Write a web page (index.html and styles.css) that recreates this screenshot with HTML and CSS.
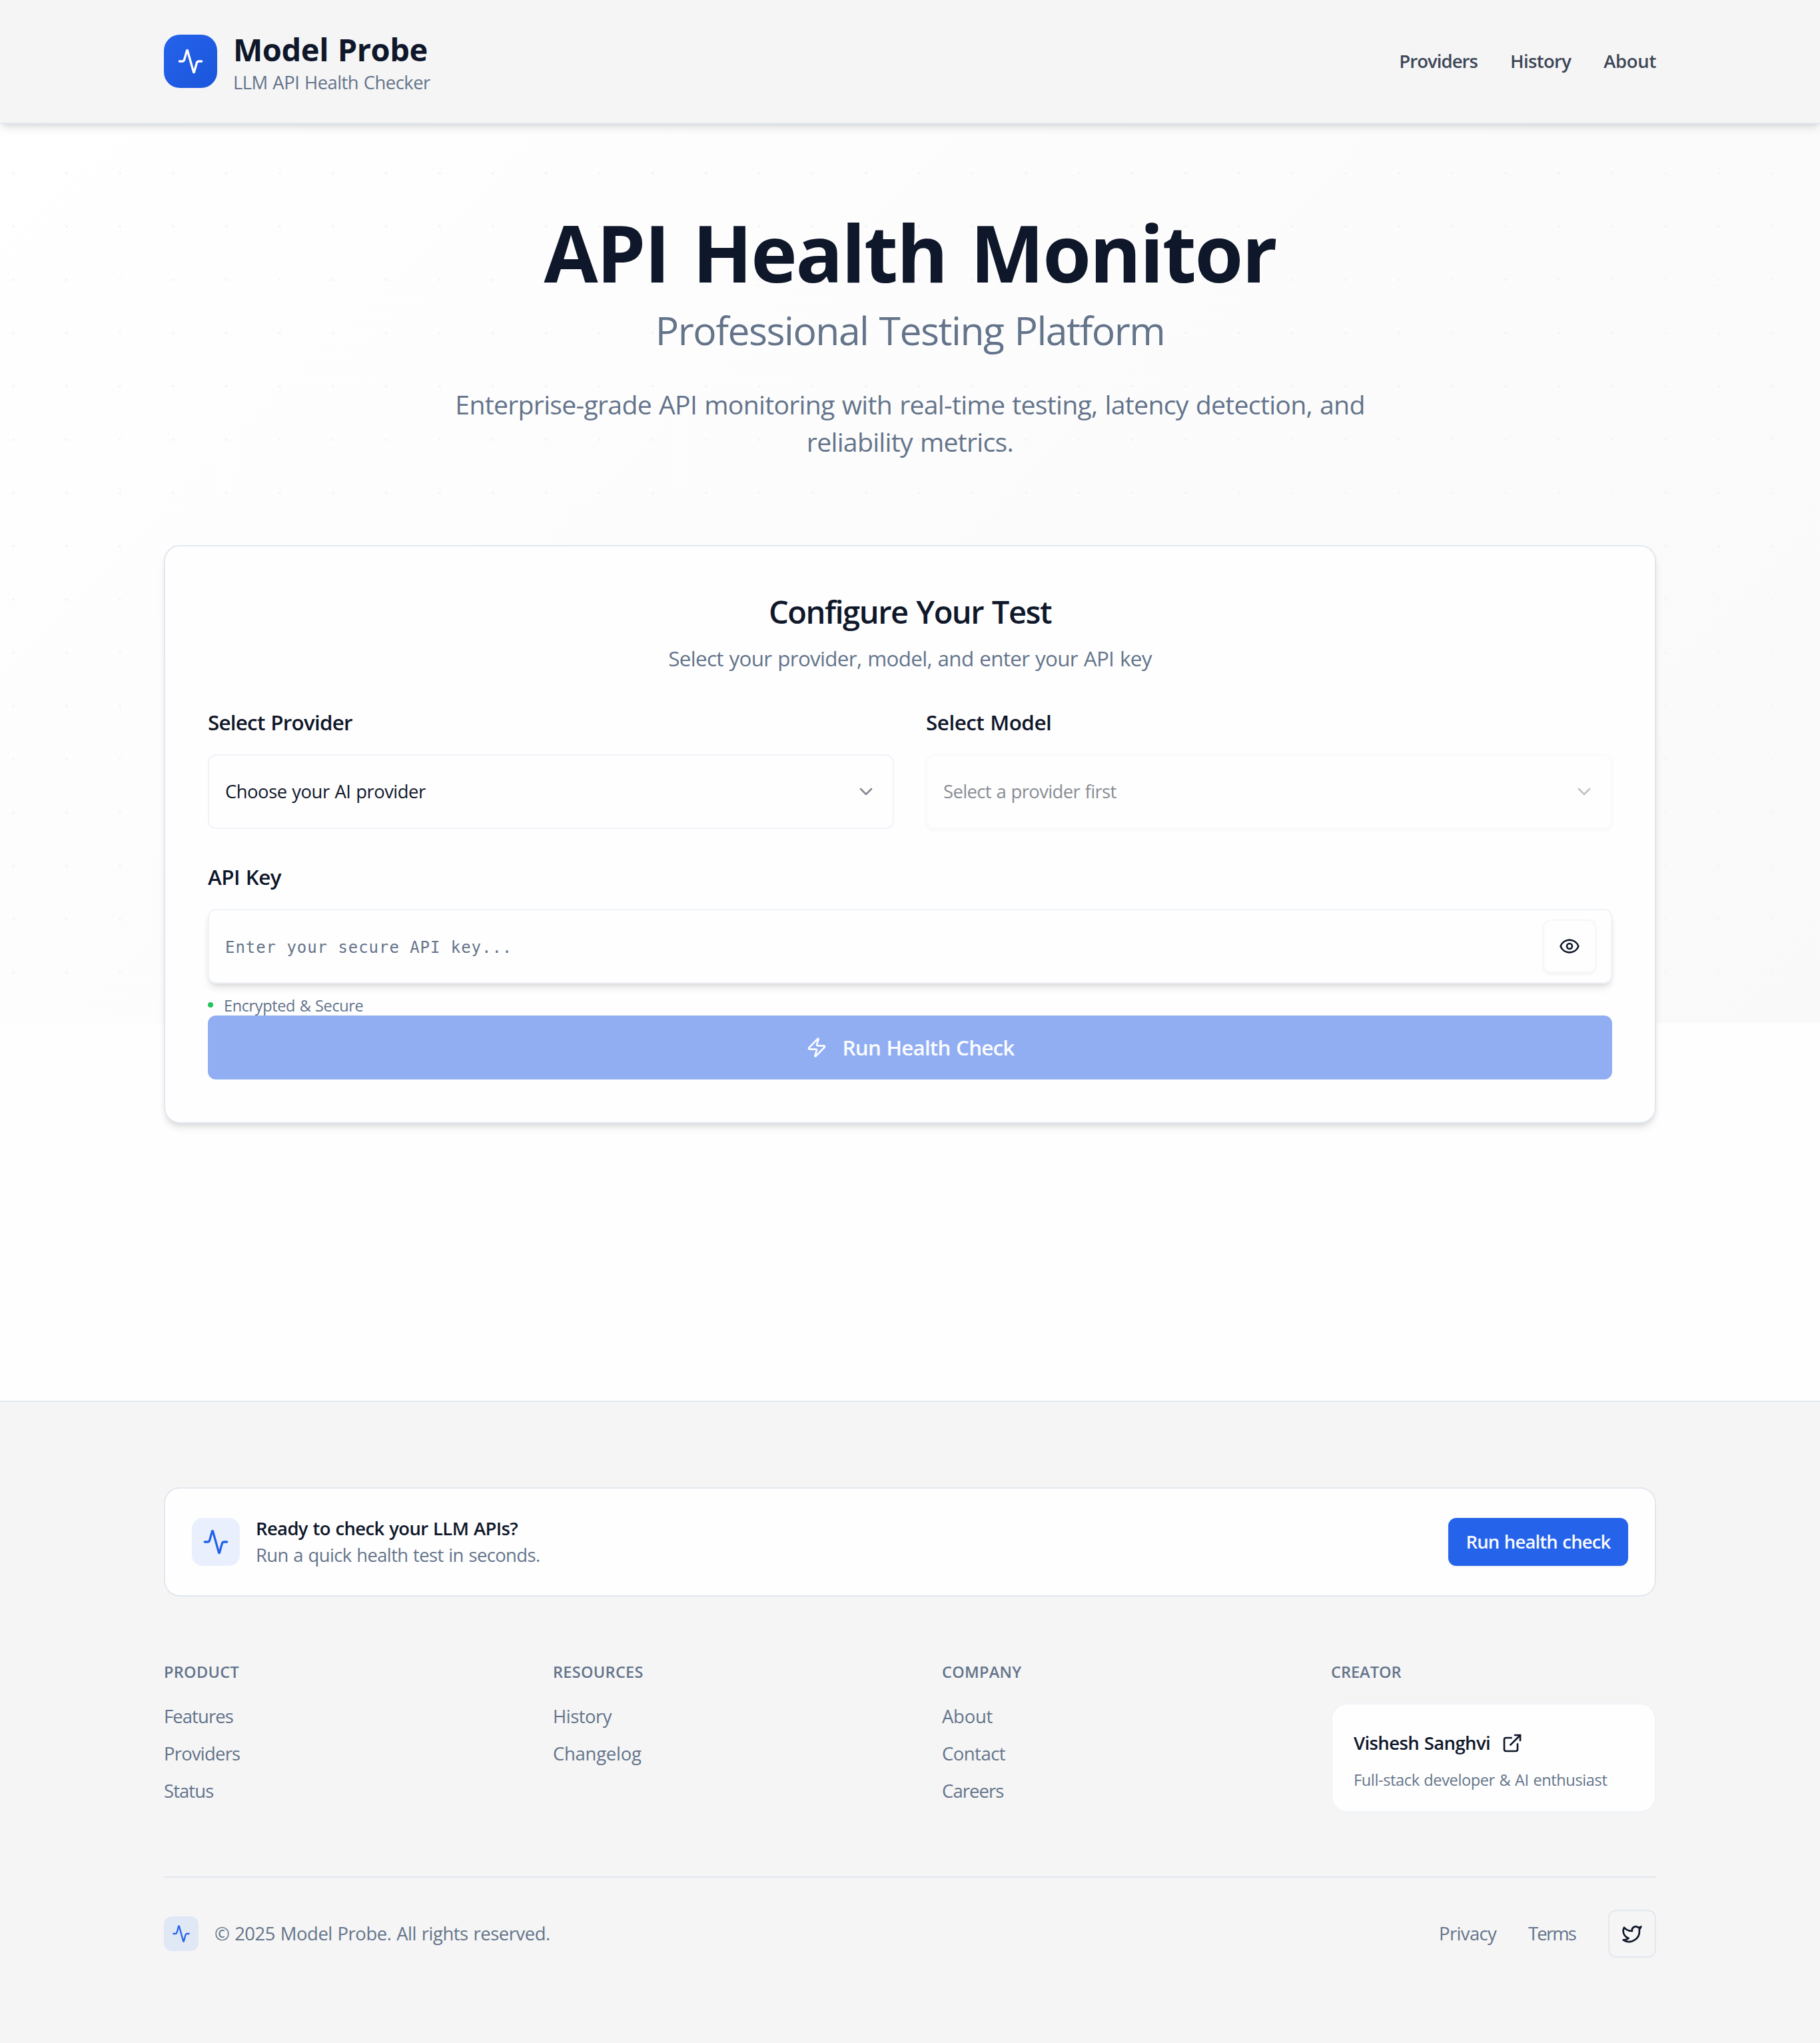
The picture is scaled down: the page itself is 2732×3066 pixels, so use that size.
FILE: index.html
```html
<!DOCTYPE html>
<html lang="en">
<head>
<meta charset="utf-8">
<title>Model Probe</title>
<link rel="stylesheet" href="styles.css">
</head>
<body>
<svg class="sprite" aria-hidden="true">
  <symbol id="activity" viewBox="0 0 24 24"><path d="M22 12h-2.48a2 2 0 0 0-1.93 1.46l-2.35 8.36a.25.25 0 0 1-.48 0L9.24 2.18a.25.25 0 0 0-.48 0l-2.35 8.36A2 2 0 0 1 4.49 12H2"/></symbol>
  <symbol id="chevron" viewBox="0 0 24 24"><path d="m6 9 6 6 6-6"/></symbol>
  <symbol id="eye" viewBox="0 0 24 24"><path d="M2.062 12.348a1 1 0 0 1 0-.696 10.75 10.75 0 0 1 19.876 0 1 1 0 0 1 0 .696 10.75 10.75 0 0 1-19.876 0"/><circle cx="12" cy="12" r="3"/></symbol>
  <symbol id="zap" viewBox="0 0 24 24"><path d="M4 14a1 1 0 0 1-.78-1.63l9.9-10.2a.5.5 0 0 1 .86.46l-1.92 6.02A1 1 0 0 0 13 10h7a1 1 0 0 1 .78 1.63l-9.9 10.2a.5.5 0 0 1-.86-.46l1.92-6.02A1 1 0 0 0 11 14z"/></symbol>
  <symbol id="external" viewBox="0 0 24 24"><path d="M15 3h6v6"/><path d="M10 14 21 3"/><path d="M18 13v6a2 2 0 0 1-2 2H5a2 2 0 0 1-2-2V8a2 2 0 0 1 2-2h6"/></symbol>
  <symbol id="twitter" viewBox="0 0 24 24"><path d="M22 4s-.7 2.1-2 3.4c1.6 10-9.4 17.3-18 11.6 2.2.1 4.4-.6 6-2C3 15.5.5 9.6 3 5c2.2 2.6 5.6 4.1 9 4-.9-4.2 4-6.6 7-3.8 1.1 0 3-1.2 3-1.2z"/></symbol>
</svg>

<div class="backdrop"></div>

<header class="header">
  <div class="container header-row">
    <div class="brand">
      <span class="brand-logo"><svg class="icon icon-40"><use href="#activity"/></svg></span>
      <div class="brand-text">
        <div class="brand-name">Model Probe</div>
        <div class="brand-tag">LLM API Health Checker</div>
      </div>
    </div>
    <nav class="nav">
      <a class="track-33">Providers</a>
      <a class="track-23">History</a>
      <a class="track-11">About</a>
    </nav>
  </div>
</header>

<main class="container main">
  <section class="hero">
    <h1 class="hero-title">API Health Monitor</h1>
    <p class="hero-sub">Professional Testing Platform</p>
    <p class="hero-desc">Enterprise-grade API monitoring with real-time testing, latency detection, and reliability metrics.</p>
  </section>

  <section class="card">
    <h2 class="card-title">Configure Your Test</h2>
    <p class="card-sub">Select your provider, model, and enter your API key</p>
    <div class="fields">
      <div class="field">
        <div class="label track-24">Select Provider</div>
        <div class="select"><span class="track-18">Choose your AI provider</span><svg class="icon icon-32"><use href="#chevron"/></svg></div>
      </div>
      <div class="field">
        <div class="label track-15">Select Model</div>
        <div class="select disabled"><span class="track-23">Select a provider first</span><svg class="icon icon-32"><use href="#chevron"/></svg></div>
      </div>
    </div>
    <div class="field key-field">
      <div class="label track-18">API Key</div>
      <div class="input">
        <span class="placeholder">Enter your secure API key...</span>
        <button class="reveal"><svg class="icon icon-32"><use href="#eye"/></svg></button>
      </div>
      <div class="secure"><i class="dot"></i><span>Encrypted &amp; Secure</span></div>
    </div>
    <button class="submit"><svg class="icon icon-32"><use href="#zap"/></svg><span>Run Health Check</span></button>
  </section>
</main>

<footer class="footer">
  <div class="container">
    <div class="cta">
      <span class="cta-icon"><svg class="icon icon-40"><use href="#activity"/></svg></span>
      <div class="cta-text">
        <div class="cta-title">Ready to check your LLM APIs?</div>
        <div class="cta-sub">Run a quick health test in seconds.</div>
      </div>
      <button class="cta-button"><span>Run health check</span></button>
    </div>

    <div class="columns">
      <div>
        <h3 class="col-title">PRODUCT</h3>
        <div class="links"><a class="track-33">Features</a><a class="track-28">Providers</a><a class="track-33">Status</a></div>
      </div>
      <div>
        <h3 class="col-title">RESOURCES</h3>
        <div class="links"><a class="track-18">History</a><a class="track-9">Changelog</a></div>
      </div>
      <div>
        <h3 class="col-title">COMPANY</h3>
        <div class="links"><a class="track-9">About</a><a class="track-18">Contact</a><a class="track-33">Careers</a></div>
      </div>
      <div>
        <h3 class="col-title creator-title">CREATOR</h3>
        <div class="creator">
          <div class="creator-name"><span>Vishesh Sanghvi</span><svg class="icon icon-32"><use href="#external"/></svg></div>
          <div class="creator-bio">Full-stack developer &amp; AI enthusiast</div>
        </div>
      </div>
    </div>

    <div class="bottom">
      <span class="bottom-icon"><svg class="icon icon-28"><use href="#activity"/></svg></span>
      <span class="copyright">© 2025 Model Probe. All rights reserved.</span>
      <a class="track-23">Privacy</a>
      <a class="terms">Terms</a>
      <span class="social"><svg class="icon icon-32"><use href="#twitter"/></svg></span>
    </div>
  </div>
</footer>
</body>
</html>
```
FILE: styles.css
```css
:root {
  --ink: #0f172a;
  --muted: #64748b;
  --line: #e2e8f0;
  --line-soft: #eff3f8;
  --blue: #2563eb;
  --surface: #f5f5f5;
  --shadow-md: 0 8px 12px -2px rgba(0, 0, 0, .1), 0 4px 8px -4px rgba(0, 0, 0, .1);
  --shadow-sm: 0 2px 4px rgba(0, 0, 0, .05);
  --fs-24: 23.52px;
  --fs-28: 27.44px;
  --fs-32: 31.36px;
  --fs-40: 39.2px;
  --fs-48: 47.04px;
}

* { box-sizing: border-box; margin: 0; padding: 0; word-spacing: .04em; }

body {
  position: relative;
  background: #fefefe;
  color: var(--ink);
  font-family: "Open Sans", "Noto Sans", sans-serif;
  font-size: var(--fs-28);
  line-height: 39px;
}

button { border: 0; font: inherit; color: inherit; background: none; }

.sprite { position: absolute; width: 0; height: 0; }

.icon {
  display: block;
  flex: none;
  fill: none;
  stroke: currentColor;
  stroke-width: 2;
  stroke-linecap: round;
  stroke-linejoin: round;
}
.icon-28 { width: 28px; height: 28px; }
.icon-32 { width: 32px; height: 32px; }
.icon-40 { width: 40px; height: 40px; }

.track-9 { letter-spacing: -.009em; }
.track-11 { letter-spacing: -.011em; }
.track-15 { letter-spacing: -.0148em; }
.track-18 { letter-spacing: -.0181em; }
.track-23 { letter-spacing: -.0234em; }
.track-24 { letter-spacing: -.024em; }
.track-28 { letter-spacing: -.028em; }
.track-33 { letter-spacing: -.033em; }

.container { width: 2240px; margin: 0 auto; }

/* viewport-high wash with a faint dot grid */
.backdrop {
  position: absolute;
  inset: 0 0 auto;
  height: 1536px;
  z-index: -1;
  background:
    radial-gradient(circle at 20px 20px, #f3f5f8 2px, transparent 2px) 0 0 / 80px 80px,
    linear-gradient(135deg, #fff, #f9f9f9);
}

/* header */
.header {
  position: relative;
  height: 186px;
  background: var(--surface);
  border-bottom: 2px solid var(--line);
  box-shadow: var(--shadow-md);
}
.header-row { display: flex; align-items: center; justify-content: space-between; height: 184px; }
.brand { display: flex; align-items: center; gap: 24px; }
.brand-logo {
  display: grid;
  place-items: center;
  width: 80px;
  height: 80px;
  border-radius: 24px;
  color: #fff;
  background: linear-gradient(135deg, #2563eb, #1a56db);
}
.brand-text { padding-top: 5px; }
.brand-name { font-size: var(--fs-48); line-height: 58px; font-weight: 700; letter-spacing: -.01em; }
.brand-tag { line-height: 41px; color: var(--muted); letter-spacing: -.0198em; }
.nav { display: flex; gap: 49px; padding-bottom: 1px; font-weight: 600; color: #3d4657; }

/* hero */
.hero { padding: 132px 0 127px; text-align: center; color: var(--muted); }
.hero-title { font-size: 117.6px; line-height: 120px; font-weight: 700; letter-spacing: -.0185em; word-spacing: .06em; color: var(--ink); }
.hero-sub { margin-top: 21px; font-size: 58.8px; line-height: 72px; letter-spacing: -.0252em; }
.hero-desc { width: 1440px; margin: 48px auto 0; font-size: var(--fs-40); line-height: 56px; letter-spacing: -.0181em; }

/* form card */
.card {
  padding: 64px;
  background: #fefefe;
  border: 2px solid var(--line);
  border-radius: 24px;
  box-shadow: var(--shadow-md);
}
.card-title { font-size: var(--fs-48); line-height: 68px; font-weight: 600; letter-spacing: -.031em; text-align: center; }
.card-sub { margin-top: 12px; font-size: var(--fs-32); line-height: 47px; letter-spacing: -.0212em; text-align: center; color: var(--muted); }
.fields { display: grid; grid-template-columns: 1fr 1fr; gap: 48px; margin-top: 49px; }
.label { margin-bottom: 25px; font-size: var(--fs-32); line-height: 47px; font-weight: 600; }
.select, .input {
  display: flex;
  align-items: center;
  justify-content: space-between;
  height: 112px;
  padding: 0 24px;
  background: #fefefe;
  border: 2px solid var(--line-soft);
  border-radius: 12px;
}
.select span { padding-bottom: 1px; }
.select .icon { opacity: .5; }
.select.disabled { opacity: .5; border-color: #f6f7f9; box-shadow: var(--shadow-sm); }
.key-field { margin-top: 48px; }
.input { padding-right: 22px; box-shadow: var(--shadow-md); }
.placeholder {
  padding-top: 4px;
  font: 24px/32px "DejaVu Sans Mono", monospace;
  letter-spacing: .95px;
  word-spacing: 0;
  color: var(--muted);
}
.reveal {
  display: grid;
  place-items: center;
  width: 80px;
  height: 80px;
  border: 2px solid #f6f7fb;
  border-radius: 12px;
  box-shadow: var(--shadow-sm);
}
.secure {
  display: flex;
  gap: 16px;
  margin: 17px 0 -1px;
  font-size: var(--fs-24);
  line-height: 32px;
  letter-spacing: -.0165em;
  color: var(--muted);
}
.dot { width: 8px; height: 8px; margin-top: 11px; border-radius: 50%; background: #22c55e; }
.submit {
  position: relative;
  display: flex;
  align-items: center;
  justify-content: center;
  gap: 23px;
  width: 100%;
  height: 96px;
  border-radius: 12px;
  background: #91aef3;
  color: #fbfcff;
  font-size: var(--fs-32);
  line-height: 47px;
  font-weight: 600;
  letter-spacing: -.0263em;
}
.submit span, .cta-button span { padding-bottom: 1px; }

/* footer */
.footer { margin-top: 416px; padding: 128px 0; background: var(--surface); border-top: 2px solid var(--line); }
.cta {
  display: flex;
  align-items: center;
  height: 164px;
  padding: 0 40px;
  background: #fefefe;
  border: 2px solid var(--line);
  border-radius: 24px;
}
.cta-icon {
  display: grid;
  place-items: center;
  width: 72px;
  height: 72px;
  margin-right: 24px;
  border-radius: 16px;
  color: var(--blue);
  background: #e9effd;
}
.cta-text { flex: 1; line-height: 40px; }
.cta-title { font-weight: 600; letter-spacing: -.0225em; }
.cta-sub { color: var(--muted); letter-spacing: -.0225em; }
.cta-button {
  display: flex;
  align-items: center;
  justify-content: center;
  width: 270px;
  height: 72px;
  border-radius: 12px;
  background: var(--blue);
  color: #f8fafc;
  font-weight: 600;
  letter-spacing: -.0301em;
  box-shadow: var(--shadow-sm);
}

.columns { display: grid; grid-template-columns: repeat(4, 1fr); gap: 96px; margin-top: 96px; color: var(--muted); }
.col-title { margin-bottom: 30px; font-size: var(--fs-24); line-height: 34px; font-weight: 600; letter-spacing: .013em; }
.creator-title { letter-spacing: .001em; }
.links { display: grid; gap: 17px; }
.creator {
  height: 164px;
  padding: 32px;
  background: #fefefe;
  border: 2px solid var(--line-soft);
  border-radius: 24px;
}
.creator-name { display: flex; align-items: center; gap: 17px; height: 52px; font-weight: 600; letter-spacing: -.0211em; color: var(--ink); }
.creator-name span { padding-bottom: 1px; }
.creator-bio { margin-top: 13px; font-size: var(--fs-24); line-height: 32px; letter-spacing: -.0155em; white-space: nowrap; }

.bottom {
  display: flex;
  align-items: center;
  height: 122px;
  margin-top: 96px;
  padding-top: 48px;
  gap: 48px;
  border-top: 2px solid var(--line);
  color: var(--muted);
}
.bottom a, .copyright { padding-bottom: 1px; }
.bottom-icon {
  display: grid;
  place-items: center;
  width: 52px;
  height: 52px;
  margin-right: -24px;
  border-radius: 12px;
  color: var(--blue);
  background: #e0e7f5;
}
.copyright { flex: 1; letter-spacing: -.0168em; }
.bottom .terms { margin-right: 1px; letter-spacing: -.068em; }
.social {
  display: grid;
  place-items: center;
  width: 72px;
  height: 72px;
  border: 2px solid var(--line);
  border-radius: 12px;
  color: var(--ink);
}
```
